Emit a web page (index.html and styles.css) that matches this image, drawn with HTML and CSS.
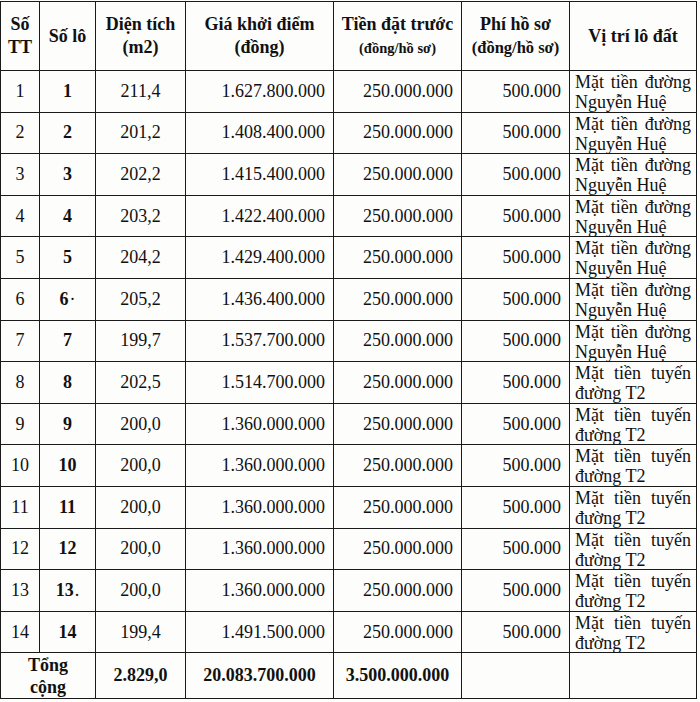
FILE: index.html
```html
<!DOCTYPE html>
<html lang="vi">
<head>
<meta charset="utf-8">
<title>Bảng lô đất</title>
<link rel="stylesheet" href="styles.css">
</head>
<body>
<div class="page">
<table class="lots">
<colgroup>
<col class="c-stt"><col class="c-lot"><col class="c-area"><col class="c-price"><col class="c-dep"><col class="c-fee"><col class="c-loc">
</colgroup>
<thead>
<tr class="head">
<th>Số<br>TT</th>
<th>Số lô</th>
<th>Diện tích<br>(m2)</th>
<th>Giá khởi điểm<br>(đồng)</th>
<th>Tiền đặt trước<br><span class="sub-small">(đồng/hồ sơ)</span></th>
<th>Phí hồ sơ<br><span class="sub">(đồng/hồ sơ)</span></th>
<th>Vị trí lô đất</th>
</tr>
</thead>
<tbody>
<tr><td class="ctr">1</td><td class="ctr b">1</td><td class="ctr">211,4</td><td class="num">1.627.800.000</td><td class="num">250.000.000</td><td class="num">500.000</td><td class="loc"><div class="loc-text">Mặt tiền đường Nguyễn Huệ</div></td></tr>
<tr><td class="ctr">2</td><td class="ctr b">2</td><td class="ctr">201,2</td><td class="num">1.408.400.000</td><td class="num">250.000.000</td><td class="num">500.000</td><td class="loc"><div class="loc-text">Mặt tiền đường Nguyễn Huệ</div></td></tr>
<tr><td class="ctr">3</td><td class="ctr b">3</td><td class="ctr">202,2</td><td class="num">1.415.400.000</td><td class="num">250.000.000</td><td class="num">500.000</td><td class="loc"><div class="loc-text">Mặt tiền đường Nguyễn Huệ</div></td></tr>
<tr><td class="ctr">4</td><td class="ctr b">4</td><td class="ctr">203,2</td><td class="num">1.422.400.000</td><td class="num">250.000.000</td><td class="num">500.000</td><td class="loc"><div class="loc-text">Mặt tiền đường Nguyễn Huệ</div></td></tr>
<tr><td class="ctr">5</td><td class="ctr b">5</td><td class="ctr">204,2</td><td class="num">1.429.400.000</td><td class="num">250.000.000</td><td class="num">500.000</td><td class="loc"><div class="loc-text">Mặt tiền đường Nguyễn Huệ</div></td></tr>
<tr><td class="ctr">6</td><td class="ctr b">6<span class="dot">·</span></td><td class="ctr">205,2</td><td class="num">1.436.400.000</td><td class="num">250.000.000</td><td class="num">500.000</td><td class="loc"><div class="loc-text">Mặt tiền đường Nguyễn Huệ</div></td></tr>
<tr><td class="ctr">7</td><td class="ctr b">7</td><td class="ctr">199,7</td><td class="num">1.537.700.000</td><td class="num">250.000.000</td><td class="num">500.000</td><td class="loc"><div class="loc-text">Mặt tiền đường Nguyễn Huệ</div></td></tr>
<tr><td class="ctr">8</td><td class="ctr b">8</td><td class="ctr">202,5</td><td class="num">1.514.700.000</td><td class="num">250.000.000</td><td class="num">500.000</td><td class="loc"><div class="loc-text">Mặt tiền tuyến đường T2</div></td></tr>
<tr><td class="ctr">9</td><td class="ctr b">9</td><td class="ctr">200,0</td><td class="num">1.360.000.000</td><td class="num">250.000.000</td><td class="num">500.000</td><td class="loc"><div class="loc-text">Mặt tiền tuyến đường T2</div></td></tr>
<tr><td class="ctr">10</td><td class="ctr b">10</td><td class="ctr">200,0</td><td class="num">1.360.000.000</td><td class="num">250.000.000</td><td class="num">500.000</td><td class="loc"><div class="loc-text">Mặt tiền tuyến đường T2</div></td></tr>
<tr><td class="ctr">11</td><td class="ctr b">11</td><td class="ctr">200,0</td><td class="num">1.360.000.000</td><td class="num">250.000.000</td><td class="num">500.000</td><td class="loc"><div class="loc-text">Mặt tiền tuyến đường T2</div></td></tr>
<tr><td class="ctr">12</td><td class="ctr b">12</td><td class="ctr">200,0</td><td class="num">1.360.000.000</td><td class="num">250.000.000</td><td class="num">500.000</td><td class="loc"><div class="loc-text">Mặt tiền tuyến đường T2</div></td></tr>
<tr><td class="ctr">13</td><td class="ctr b">13<span class="dot">.</span></td><td class="ctr">200,0</td><td class="num">1.360.000.000</td><td class="num">250.000.000</td><td class="num">500.000</td><td class="loc"><div class="loc-text">Mặt tiền tuyến đường T2</div></td></tr>
<tr><td class="ctr">14</td><td class="ctr b">14</td><td class="ctr">199,4</td><td class="num">1.491.500.000</td><td class="num">250.000.000</td><td class="num">500.000</td><td class="loc"><div class="loc-text">Mặt tiền tuyến đường T2</div></td></tr>
<tr class="total"><td colspan="2" class="ctr b tot-label">Tổng<br>cộng</td><td class="ctr b">2.829,0</td><td class="ctr b">20.083.700.000</td><td class="ctr b">3.500.000.000</td><td></td><td></td></tr>
</tbody>
</table>
</div>
</body>
</html>
```
FILE: styles.css
```css
html, body {
  margin: 0;
  padding: 0;
  background: #fdfdfc;
}
.page {
  padding: 1px 0 0 0;
  width: 700px;
  height: 702px;
  overflow: hidden;
  box-sizing: border-box;
}
.lots {
  border-collapse: collapse;
  table-layout: fixed;
  width: 696px;
  font-family: "Liberation Serif", "Times New Roman", serif;
  font-size: 18px;
  color: #111111;
}
.c-stt { width: 39px; }
.c-lot { width: 56px; }
.c-area { width: 90px; }
.c-price { width: 148px; }
.c-dep { width: 128px; }
.c-fee { width: 108px; }
.c-loc { width: 127px; }
.lots th, .lots td {
  border: 1.6px solid #1a1a1a;
  padding: 0;
  vertical-align: middle;
}
.head th {
  height: 68px;
  font-weight: bold;
  text-align: center;
  line-height: 23px;
  font-size: 18px;
}
.sub-small {
  font-size: 14.5px;
}
.sub {
  font-size: 16.5px;
}
.lots tbody tr {
  height: 41.6px;
}
.lots tbody tr.total {
  height: 46px;
}
.ctr { text-align: center; }
.b { font-weight: bold; }
.num {
  text-align: right;
  padding-right: 8px !important;
}
.loc {
  vertical-align: top !important;
  padding: 0 5px !important;
}
.loc-text {
  height: 38px;
  padding-top: 1px;
  overflow: visible;
  text-align: justify;
  text-align-last: left;
  line-height: 20px;
  font-size: 18px;
}
.dot {
  font-weight: normal;
  margin-left: 1px;
}
.tot-label {
  line-height: 22px;
}
```
